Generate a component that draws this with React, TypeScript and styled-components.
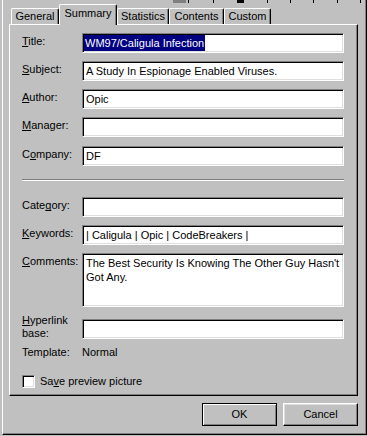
import React from "react";
import styled, { createGlobalStyle, css } from "styled-components";

const Global = createGlobalStyle`
  html, body { margin: 0; padding: 0; background: #c0c0c0; }
  body {
    font-family: "Liberation Sans", Arial, sans-serif;
    font-size: 11px;
    color: #000;
  }
`;

const Frame = styled.div`
  box-sizing: border-box;
  margin-left: 2px;
  width: 365px;
  height: 435px;
  background: #c0c0c0;
  border-left: 1px solid #fff;
  border-right: 1px solid #000;
  border-bottom: 1px solid #000;
  box-shadow: inset -1px -1px 0 #808080;
  padding: 0 8px 0 6px;
  display: flex;
  flex-direction: column;
`;

const TopStrip = styled.div`
  display: flex;
  height: 3px;
  margin: 0 -8px 0 -6px;
`;

const Mark = styled.div<{ $w: number; $c?: string }>`
  flex: none;
  width: ${(p) => p.$w}px;
  height: 3px;
  background: ${(p) => p.$c ?? "transparent"};
`;

const TabRow = styled.div`
  display: flex;
  align-items: flex-end;
  height: 20px;
  margin: 1px 0 0 2px;
  position: relative;
  z-index: 1;
`;

const Tab = styled.div<{ $w: number; $active?: boolean }>`
  box-sizing: border-box;
  flex: none;
  width: ${(p) => p.$w}px;
  height: 16px;
  background: #c0c0c0;
  border-top: 1px solid #fff;
  border-left: 1px solid #fff;
  border-right: 1px solid #000;
  border-radius: 2px 2px 0 0;
  box-shadow: inset -1px 0 0 #808080;
  text-align: center;
  line-height: 14px;
  white-space: nowrap;
  ${(p) =>
    p.$active &&
    css`
      height: 21px;
      margin-bottom: -1px;
      line-height: 16px;
    `}
`;

const Pane = styled.div`
  box-sizing: border-box;
  height: 372px;
  border-top: 1px solid #fff;
  border-left: 1px solid #fff;
  border-right: 1px solid #000;
  border-bottom: 1px solid #000;
  box-shadow: inset -1px -1px 0 #808080;
  padding: 8px 13px 0 12px;
  display: flex;
  flex-direction: column;
`;

const Row = styled.div<{ $mt?: number }>`
  display: flex;
  align-items: flex-start;
  margin-top: ${(p) => p.$mt ?? 0}px;
`;

const Label = styled.div<{ $lh?: number; $mt?: number }>`
  flex: none;
  width: 60px;
  line-height: ${(p) => p.$lh ?? 16}px;
  margin-top: ${(p) => p.$mt ?? 0}px;
  white-space: nowrap;
`;

const Value = styled.div`
  line-height: 16px;
`;

const Field = styled.div<{ $h?: number; $multi?: boolean }>`
  flex: 1;
  box-sizing: border-box;
  height: ${(p) => p.$h ?? 20}px;
  background: #fff;
  border-style: solid;
  border-width: 1px;
  border-color: #808080 #fff #fff #808080;
  box-shadow: inset 1px 1px 0 #000, inset -1px -1px 0 #dfdfdf;
  padding: 1px 2px 1px 3px;
  line-height: 16px;
  white-space: nowrap;
  overflow: hidden;
  ${(p) =>
    p.$multi &&
    css`
      white-space: normal;
      line-height: 14px;
      padding-top: 2px;
    `}
`;

const Selected = styled.span`
  display: inline-block;
  background: #000080;
  color: #fff;
  margin-left: -2px;
  padding: 0 1px;
  height: 16px;
`;

const Separator = styled.div`
  flex: 1;
  height: 0;
  border-top: 1px solid #808080;
  border-bottom: 1px solid #fff;
`;

const CheckRow = styled.div`
  display: flex;
  align-items: flex-start;
  gap: 5px;
  margin-top: 15px;
  line-height: 13px;
`;

const CheckBox = styled.div`
  box-sizing: border-box;
  width: 13px;
  height: 13px;
  background: #fff;
  border-style: solid;
  border-width: 1px;
  border-color: #808080 #fff #fff #808080;
  box-shadow: inset 1px 1px 0 #000, inset -1px -1px 0 #dfdfdf;
`;

const ButtonRow = styled.div`
  display: flex;
  justify-content: flex-end;
  gap: 6px;
  margin-top: 7px;
`;

const Button = styled.button<{ $default?: boolean }>`
  box-sizing: border-box;
  width: 75px;
  height: 23px;
  margin: 0;
  padding: 0 0 2px;
  font: inherit;
  color: #000;
  line-height: 16px;
  background: #c0c0c0;
  border: 1px solid;
  border-color: #fff #000 #000 #fff;
  box-shadow: inset -1px -1px 0 #808080, inset 1px 1px 0 #dfdfdf;
  ${(p) =>
    p.$default &&
    css`
      border-color: #000;
      box-shadow: inset 1px 1px 0 #fff, inset -1px -1px 0 #808080;
    `}
`;

const Key = styled.u`
  text-decoration: underline;
  text-decoration-skip-ink: none;
  text-underline-offset: 1px;
`;

const marks: [number, string?][] = [
  [170],
  [13, "#808080"],
  [2],
  [1, "#000"],
  [24],
  [1, "#000"],
  [23],
  [7, "#000"],
  [23],
  [1, "#000"],
  [22],
  [1, "#000"],
  [22],
  [1, "#000"],
  [23],
  [1, "#000"],
  [22],
  [1, "#000"],
];

const tabs: { name: string; w: number; active?: boolean }[] = [
  { name: "General", w: 48 },
  { name: "Summary", w: 58, active: true },
  { name: "Statistics", w: 52 },
  { name: "Contents", w: 55 },
  { name: "Custom", w: 47 },
];

export default function App() {
  return (
    <>
      <Global />
      <Frame>
        <TopStrip>
          {marks.map(([w, c], i) => (
            <Mark key={i} $w={w} $c={c} />
          ))}
        </TopStrip>
        <TabRow>
          {tabs.map((t) => (
            <Tab key={t.name} $w={t.w} $active={t.active}>
              {t.name}
            </Tab>
          ))}
        </TabRow>
        <Pane>
          <Row>
            <Label>
              <Key>T</Key>itle:
            </Label>
            <Field>
              <Selected>WM97/Caligula Infection</Selected>
            </Field>
          </Row>
          <Row $mt={8}>
            <Label>
              <Key>S</Key>ubject:
            </Label>
            <Field>A Study In Espionage Enabled Viruses.</Field>
          </Row>
          <Row $mt={8}>
            <Label>
              <Key>A</Key>uthor:
            </Label>
            <Field>Opic</Field>
          </Row>
          <Row $mt={8}>
            <Label>
              <Key>M</Key>anager:
            </Label>
            <Field />
          </Row>
          <Row $mt={9}>
            <Label>
              C<Key>o</Key>mpany:
            </Label>
            <Field>DF</Field>
          </Row>
          <Row $mt={13}>
            <Separator />
          </Row>
          <Row $mt={16}>
            <Label>
              Cate<Key>g</Key>ory:
            </Label>
            <Field />
          </Row>
          <Row $mt={8}>
            <Label>
              <Key>K</Key>eywords:
            </Label>
            <Field>| Caligula | Opic | CodeBreakers |</Field>
          </Row>
          <Row $mt={8}>
            <Label>
              <Key>C</Key>omments:
            </Label>
            <Field $h={54} $multi>
              The Best Security Is Knowing The Other Guy Hasn't Got Any.
            </Field>
          </Row>
          <Row $mt={12}>
            <Label $lh={13} $mt={-5}>
              <Key>H</Key>yperlink
              <br />
              base:
            </Label>
            <Field />
          </Row>
          <Row $mt={4}>
            <Label>Template:</Label>
            <Value>Normal</Value>
          </Row>
          <CheckRow>
            <CheckBox />
            <span>
              Sa<Key>v</Key>e preview picture
            </span>
          </CheckRow>
        </Pane>
        <ButtonRow>
          <Button $default>OK</Button>
          <Button>Cancel</Button>
        </ButtonRow>
      </Frame>
    </>
  );
}
